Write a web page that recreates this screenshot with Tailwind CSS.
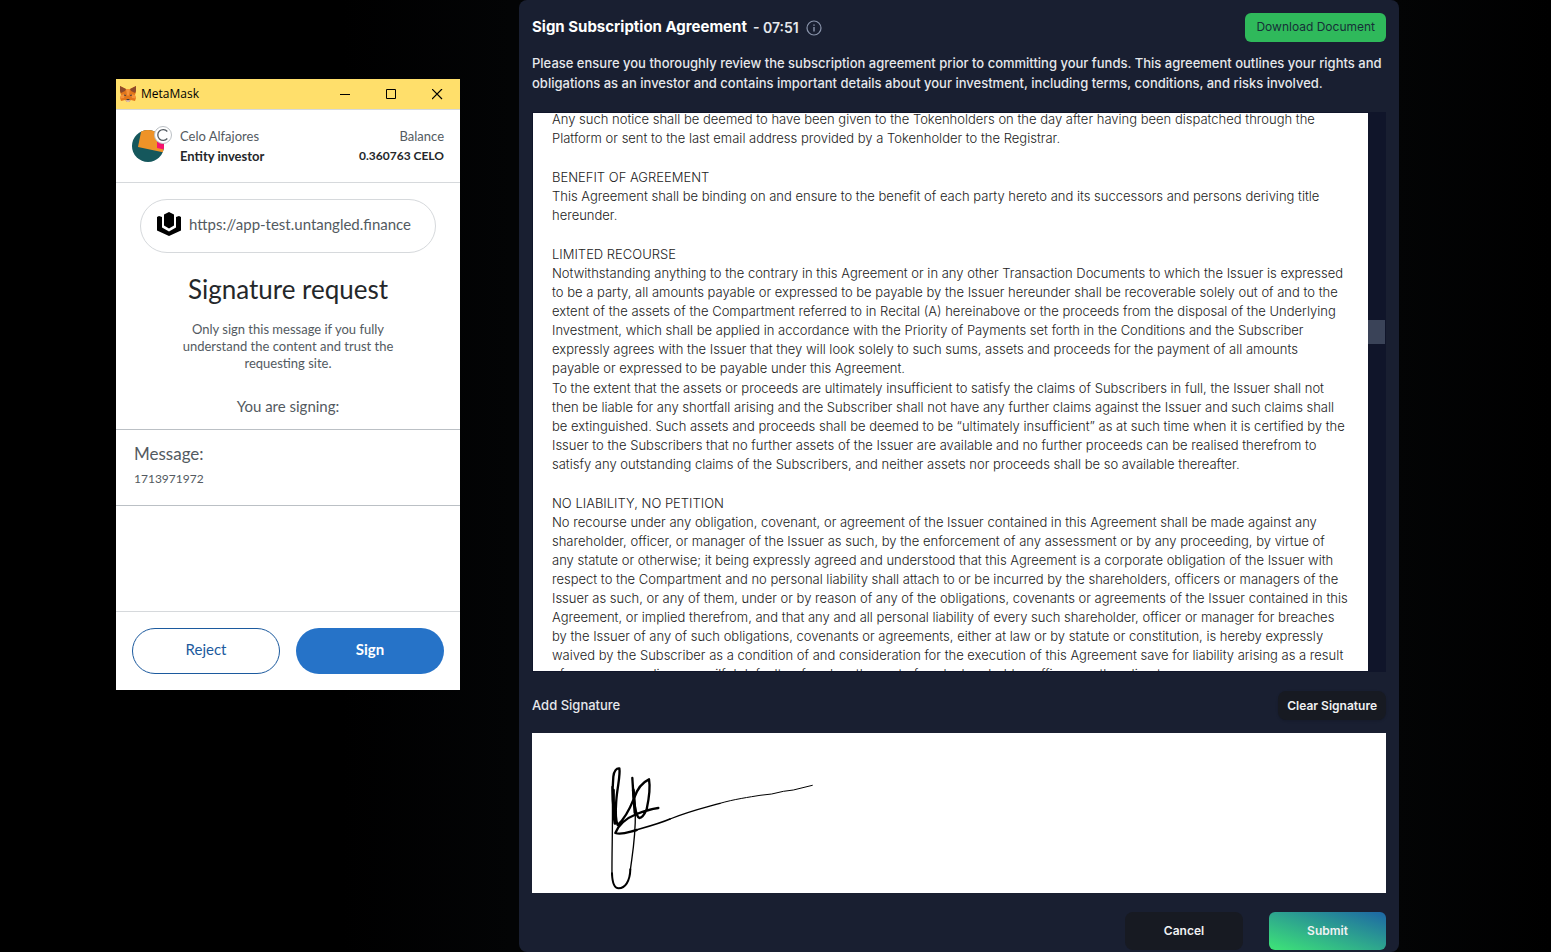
<!DOCTYPE html>
<html lang="en">
<head>
<meta charset="utf-8">
<meta name="viewport" content="width=device-width, initial-scale=1">
<title>Sign Subscription Agreement</title>
<script src="https://cdn.jsdelivr.net/npm/@tailwindcss/browser@4"></script>
</head>
<body class="min-h-screen overflow-hidden bg-black font-['Inter',sans-serif]">
<main class="flex h-screen items-start bg-[linear-gradient(90deg,#000_0%,#000_22%,#030405_33%,#030405_90%,#000_100%)] pl-[116px] pr-[152px]">

  <!-- Wallet popup -->
  <section aria-label="MetaMask" class="mt-[79px] flex w-[344px] shrink-0 flex-col bg-white font-['Lato',sans-serif] text-[#535a61]">
    <header class="flex h-[31px] items-center border-b border-[#d6d9dc] bg-[#ffdf6b] pl-1 text-black">
      <svg class="size-4" viewBox="0 0 16 16" aria-hidden="true">
        <path fill="#e2761b" d="M0 0 6 3h4l6-3v6l-1 3 1 3-1 3-4-1-2 2H7l-2-2-4 1-1-3 1-3-1-3z"/>
        <path fill="#8e4a2a" d="M0 0 6 3 5 5 1 7 0 5zM16 0l-6 3 1 2 4 2 1-2z"/>
        <path fill="#f5923a" d="m6 3 1 6 1 1 1-1 1-6zM1 9l4-1-1 4-4 .5zM15 9l-4-1 1 4 4 .5z"/>
        <path fill="#3a3a44" d="m4 8.500 2 .5-.3 1-1.700-.5zM12 8.500 10 9l.3 1 1.700-.5zM6.500 13h3l-.3 1.300H6.800z"/>
        <path fill="#d5bfb2" d="M5 14l2 .3h2l2-.3-2 2H7z"/>
      </svg>
      <h1 class="ml-[5px] flex-1 font-['Open_Sans',sans-serif] text-[12px]">MetaMask</h1>
      <button aria-label="Minimize" class="flex h-full w-[46px] items-center justify-center"><svg class="size-[11px]" viewBox="0 0 11 11"><path d="M0 5.500h10" stroke="#000" stroke-width="1" shape-rendering="crispEdges"/></svg></button>
      <button aria-label="Maximize" class="flex h-full w-[46px] items-center justify-center"><svg class="size-[11px]" viewBox="0 0 11 11" fill="none"><path d="M.5.5h9v9h-9z" stroke="#000"/></svg></button>
      <button aria-label="Close" class="flex h-full w-[46px] items-center justify-center"><svg class="size-[11px]" viewBox="0 0 11 11" fill="none"><path d="m0 0 10 10m0-10-10 10" stroke="#000" stroke-width="1.200"/></svg></button>
    </header>

    <div class="flex h-[73px] items-center border-b border-[#d6d9dc] px-4 text-[13px] leading-5">
      <svg class="-mt-1 h-[38px] w-10 shrink-0" viewBox="0 0 40 38" aria-hidden="true">
        <clipPath id="av"><circle cx="16" cy="21" r="16"/></clipPath>
        <g clip-path="url(#av)"><path fill="#15575c" d="M0 4h32v34H0z"/><path fill="#ee9328" d="M10 2l20 2 2 23.500-26-5.500z"/><path fill="#f7126f" d="M25 16h7v8.500l-7-1.500z"/></g>
        <circle cx="31" cy="10" r="8.500" fill="#fff" stroke="#bbc0c5"/>
        <path d="M35.300 6.500a5.400 5.400 0 1 0 0 7" fill="none" stroke="#535a61" stroke-width="1.300"/>
      </svg>
      <div class="ml-2 flex-1"><p>Celo Alfajores</p><p class="font-bold text-[#24272a]">Entity investor</p></div>
      <div class="text-right"><p>Balance</p><p class="text-[12px] font-bold text-[#24272a]">0.360763 CELO</p></div>
    </div>

    <div class="mx-6 mt-4 flex h-[54px] items-center gap-2 rounded-full border border-[#d6d9dc] pb-1 pl-4 text-[15px]">
      <svg class="size-6 shrink-0" viewBox="0 0 24 24" aria-hidden="true"><path d="m12 0 5 2.500v11L12 16.500 7 13.500v-11zM0 5l2-1 3 1v10.500l7 4 7-4V5l3-1 2 1v13.500L12 24 0 18.500z"/></svg>
      <span>https://app-test.untangled.finance</span>
    </div>

    <h2 class="mt-5 text-center text-[26px] leading-8 text-[#24272a]">Signature request</h2>
    <p class="mx-auto mt-4 w-[220px] text-center text-[13px] leading-[17px]">Only sign this message if you fully understand the content and trust the requesting site.</p>
    <p class="mt-6 text-center text-[15px] leading-5">You are signing:</p>

    <div class="mt-[13px] h-[77px] border-y border-[#bbc0c5] px-[18px] pt-3">
      <p class="text-[17px] leading-6">Message:</p>
      <p class="text-[12px] leading-[26px]">1713971972</p>
    </div>
    <footer class="mt-[105px] grid h-[79px] grid-cols-2 items-start gap-4 border-t border-[#d6d9dc] px-4 pt-4 text-[15px]">
      <button class="h-[46px] rounded-full border border-[#1c5a9e] pb-1 text-[#1c5a9e]">Reject</button>
      <button class="h-[46px] rounded-full bg-[#2673c8] pb-1 font-bold text-white">Sign</button>
    </footer>
  </section>

  <!-- Agreement dialog -->
  <section aria-label="Sign Subscription Agreement" class="ml-[59px] h-screen min-w-0 flex-1 rounded-lg bg-[#191f31] px-[13px] text-[13px] text-[#e6e8ec]">
    <header class="flex items-center pt-[13px]">
      <h2 class="text-[15px] font-bold text-white">Sign Subscription Agreement</h2>
      <span class="ml-[6px] text-[14px] font-semibold">- 07:51</span>
      <svg class="ml-[7px] size-4" viewBox="0 0 16 16" fill="none" stroke="#8a94ab" aria-hidden="true"><circle cx="8" cy="8" r="7" stroke-width="1.200"/><path d="M8 7v4.500M8 4.500v1.200" stroke-width="1.400"/></svg>
      <button class="ml-auto h-[29px] rounded-md bg-[#2fb95b] px-[11px] pb-px text-[12px] text-[#163037]">Download Document</button>
    </header>
    <p class="mt-[11px] text-[13px] leading-5 font-medium">Please ensure you thoroughly review the subscription agreement prior to committing your funds. This agreement outlines your rights and obligations as an investor and contains important details about your investment, including terms, conditions, and risks involved.</p>

    <div class="mt-[19px] flex h-[560px] bg-[#10152a]">
      <article class="my-px ml-px flex-1 overflow-hidden bg-white pr-[17px] pl-[19px] text-[13px] leading-[19px] font-light text-[#222]">
        <p class="-mt-[3px]">Any such notice shall be deemed to have been given to the Tokenholders on the day after having been dispatched through the Platform or sent to the last email address provided by a Tokenholder to the Registrar.</p>
        <h3 class="mt-5">BENEFIT OF AGREEMENT</h3>
        <p>This Agreement shall be binding on and ensure to the benefit of each party hereto and its successors and persons deriving title hereunder.</p>
        <h3 class="mt-5">LIMITED RECOURSE</h3>
        <p>Notwithstanding anything to the contrary in this Agreement or in any other Transaction Documents to which the Issuer is expressed to be a party, all amounts payable or expressed to be payable by the Issuer hereunder shall be recoverable solely out of and to the extent of the assets of the Compartment referred to in Recital (A) hereinabove or the proceeds from the disposal of the Underlying Investment, which shall be applied in accordance with the Priority of Payments set forth in the Conditions and the Subscriber expressly agrees with the Issuer that they will look solely to such sums, assets and proceeds for the payment of all amounts<br>payable or expressed to be payable under this Agreement.</p>
        <p class="mt-px">To the extent that the assets or proceeds are ultimately insufficient to satisfy the claims of Subscribers in full, the Issuer shall not then be liable for any shortfall arising and the Subscriber shall not have any further claims against the Issuer and such claims shall be extinguished. Such assets and proceeds shall be deemed to be “ultimately insufficient” as at such time when it is certified by the Issuer to the Subscribers that no further assets of the Issuer are available and no further proceeds can be realised therefrom to satisfy any outstanding claims of the Subscribers, and neither assets nor proceeds shall be so available thereafter.</p>
        <h3 class="mt-5">NO LIABILITY, NO PETITION</h3>
        <p>No recourse under any obligation, covenant, or agreement of the Issuer contained in this Agreement shall be made against any shareholder, officer, or manager of the Issuer as such, by the enforcement of any assessment or by any proceeding, by virtue of<br>any statute or otherwise; it being expressly agreed and understood that this Agreement is a corporate obligation of the Issuer with respect to the Compartment and no personal liability shall attach to or be incurred by the shareholders, officers or managers of the Issuer as such, or any of them, under or by reason of any of the obligations, covenants or agreements of the Issuer contained in this Agreement, or implied therefrom, and that any and all personal liability of every such shareholder, officer or manager for breaches by the Issuer of any of such obligations, covenants or agreements, either at law or by statute or constitution, is hereby expressly waived by the Subscriber as a condition of and consideration for the execution of this Agreement save for liability arising as a result of any gross negligence, wilful default or fraud on the part of such shareholder, officer or other director.</p>
      </article>
      <div class="w-[18px] shrink-0 pt-[208px] pr-px" aria-hidden="true"><div class="h-6 bg-[#3a4358]"></div></div>
    </div>

    <div class="mt-[19px] flex items-center justify-between">
      <h3 class="text-[13px] font-medium">Add Signature</h3>
      <button class="h-[29px] rounded-lg bg-[#171a22] px-[9px] text-[12px] font-semibold text-[#f0f1f3] shadow">Clear Signature</button>
    </div>
    <div class="mt-[13px] h-[160px] bg-white pt-[17px] pl-[58px]">
      <svg class="h-[143px] w-[240px]" viewBox="0 0 720 429" fill="none" stroke="#000" stroke-linecap="round" stroke-linejoin="round" role="img" aria-label="Signature">
        <path stroke-width="7" d="M77 219C68 180 66 120 70 80C72 62 80 54 88 55C92 75 82 110 79 150C77 180 74 205 83 225C105 205 120 175 132 145C142 115 155 98 177 88C181 110 176 150 170 178C164 192 155 204 148 204C132 196 130 130 127 84M205 174C175 178 165 182 140 192C115 202 88 220 76 249C95 256 115 246 140 240"/>
        <path stroke-width="9" d="M70 120c0 35 0 70 5 100M130 120l5 68"/>
        <path stroke-width="4" d="M66 110C70 190 65 300 66 375"/>
        <path stroke-width="6" d="M66 370C67 405 75 415 86 415C105 414 120 395 121 358"/>
        <path stroke-width="4" d="M121 360C129 300 137 260 136 190"/>
        <path stroke-width="5" d="M138 240C180 228 210 220 240 207"/>
        <path stroke-width="4" d="M240 207C300 183 340 174 390 160"/>
        <path stroke-width="3" d="M390 160C430 148 480 141 510 136L545 132L580 124L610 120L667 106"/>
      </svg>
    </div>
    <footer class="mt-[19px] flex justify-end gap-[26px] text-[12px] font-semibold text-[#f0f1f3]">
      <button class="h-[38px] w-[118px] rounded-lg bg-[#171a22]">Cancel</button>
      <button class="h-[38px] w-[117px] rounded-md bg-[linear-gradient(to_top_right,#3ee577,#1d66a5)]">Submit</button>
    </footer>
  </section>
</main>
</body>
</html>
